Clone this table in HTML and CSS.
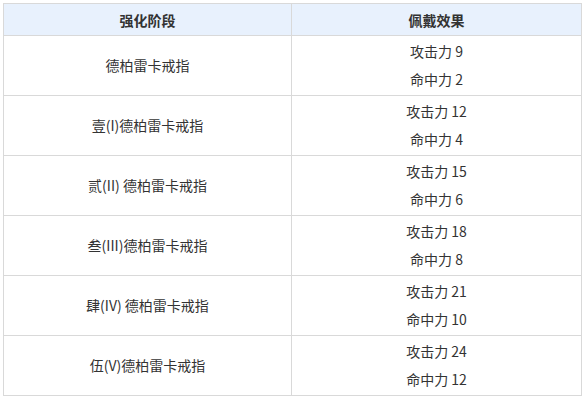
FILE: index.html
```html
<!DOCTYPE html>
<html>
<head>
<meta charset="utf-8">
<link rel="stylesheet" href="styles.css">
</head>
<body>
<div class="wrap">
<table class="tbl">
  <thead>
    <tr><th>强化阶段</th><th>佩戴效果</th></tr>
  </thead>
  <tbody>
    <tr><td>德柏雷卡戒指</td><td><div class="ln">攻击力 9</div><div class="ln">命中力 2</div></td></tr>
    <tr><td>壹(I)德柏雷卡戒指</td><td><div class="ln">攻击力 12</div><div class="ln">命中力 4</div></td></tr>
    <tr><td>贰(II) 德柏雷卡戒指</td><td><div class="ln">攻击力 15</div><div class="ln">命中力 6</div></td></tr>
    <tr><td>叁(III)德柏雷卡戒指</td><td><div class="ln">攻击力 18</div><div class="ln">命中力 8</div></td></tr>
    <tr><td>肆(IV) 德柏雷卡戒指</td><td><div class="ln">攻击力 21</div><div class="ln">命中力 10</div></td></tr>
    <tr><td>伍(V)德柏雷卡戒指</td><td><div class="ln">攻击力 24</div><div class="ln">命中力 12</div></td></tr>
  </tbody>
</table>
</div>
</body>
</html>
```
FILE: styles.css
```css
html, body { margin: 0; padding: 0; background: #fff; }
.wrap { padding: 3px 2px 0 3px; }
.tbl {
  width: 579px;
  border-collapse: collapse;
  font-family: "Noto Sans CJK SC", "Noto Sans", sans-serif;
  font-size: 14px;
  color: #333;
  table-layout: fixed;
}
.tbl th, .tbl td {
  border: 1px solid #d9d9d9;
  text-align: center;
  vertical-align: middle;
  padding: 1px 4px 2px;
}
.tbl th {
  background: #e8f1fd;
  font-weight: bold;
  height: 32px;
  box-sizing: border-box;
  padding: 0 4px;
  color: #333;
}
.tbl th:first-child { width: 288px; }
.ln { line-height: 28px; }
```
